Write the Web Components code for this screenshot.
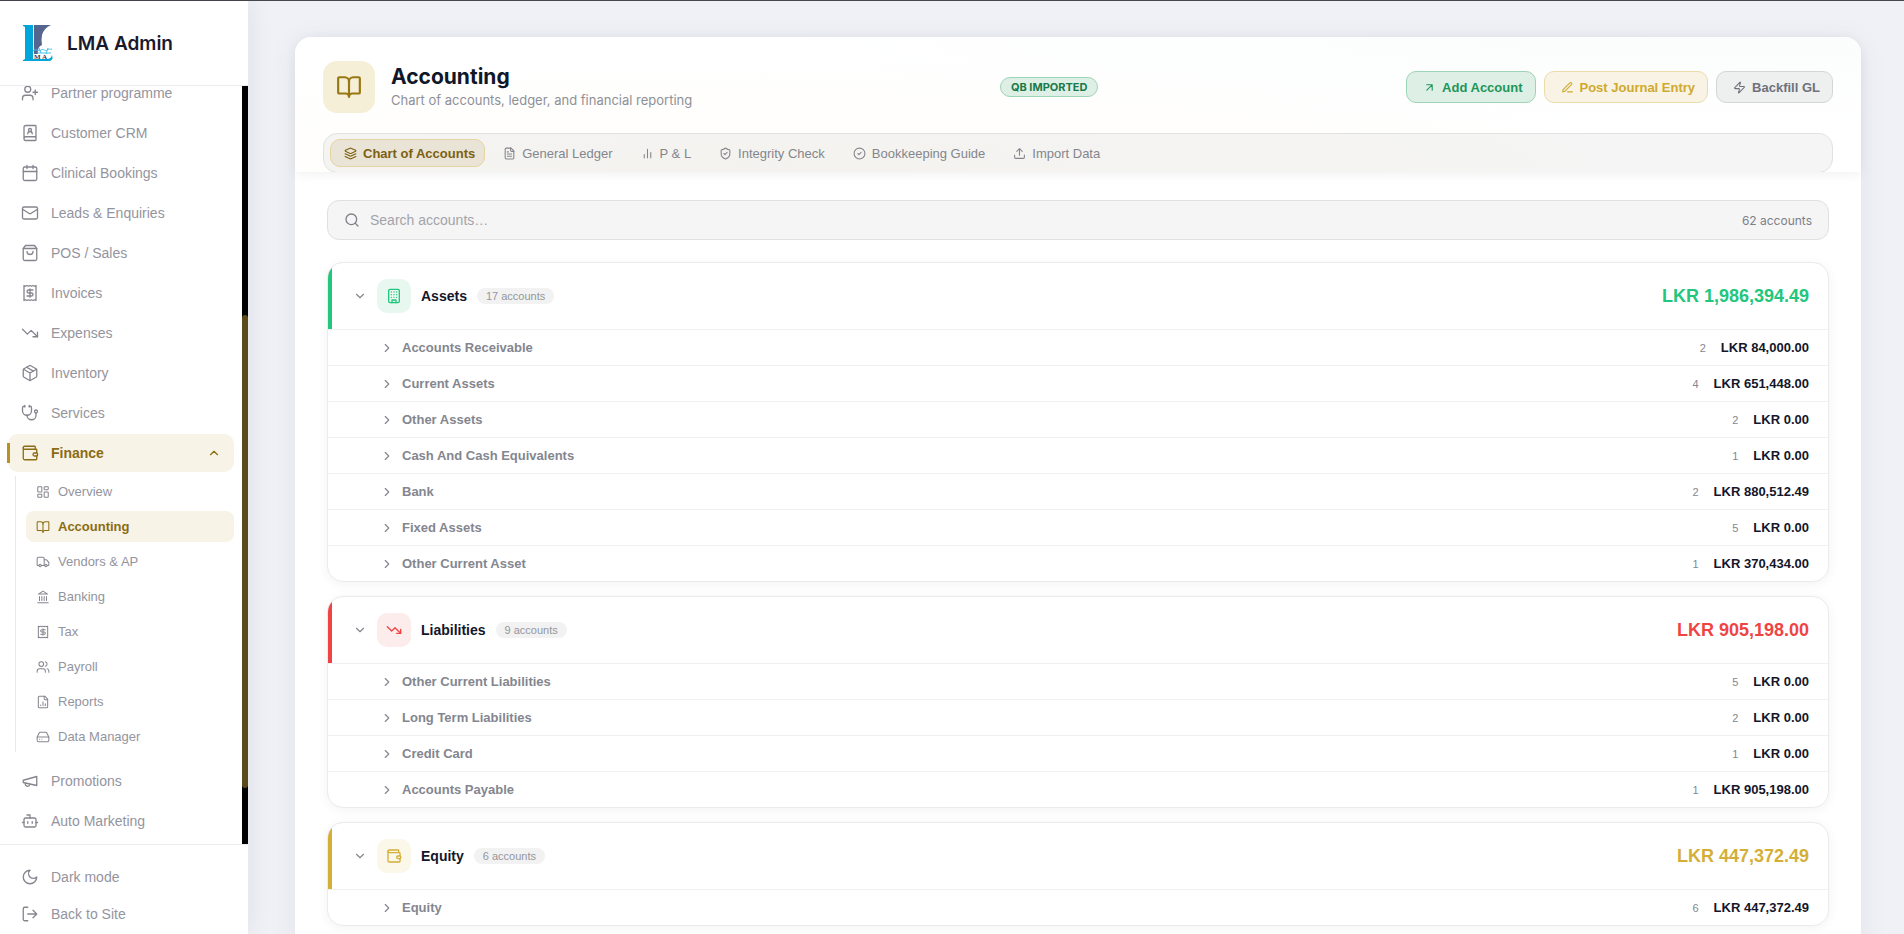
<!DOCTYPE html>
<html lang="en">
<head>
<meta charset="utf-8">
<meta name="viewport" content="width=device-width, initial-scale=1">
<title>LMA Admin - Accounting</title>
<style>
    body {
        margin: 0;
        background: #f0f1f7;
        color: #14162a;
        font-family: "Liberation Sans", Arial, sans-serif;
        font-size: 14px;
        overflow: hidden;
    }
</style>
</head>
<body>
<lma-app></lma-app>

<script>
/**
 * Inner markup of every icon, drawn on a 24x24 grid.
 */
const icons = {
    'user-plus': '<path d="M16 21v-2a4 4 0 0 0-4-4H6a4 4 0 0 0-4 4v2"/><circle cx="9" cy="7" r="4"/><path d="M19 8v6M22 11h-6"/>',
    'book-user': '<path d="M15 13a3 3 0 1 0-6 0"/><path d="M4 19.5v-15A2.5 2.5 0 0 1 6.5 2H19a1 1 0 0 1 1 1v18a1 1 0 0 1-1 1H6.5a1 1 0 0 1 0-5H20"/><circle cx="12" cy="8" r="2"/>',
    'calendar': '<path d="M8 2v4M16 2v4M3 10h18"/><rect width="18" height="18" x="3" y="4" rx="2"/>',
    'mail': '<rect width="20" height="16" x="2" y="4" rx="2"/><path d="m22 7-8.97 5.7a1.94 1.94 0 0 1-2.06 0L2 7"/>',
    'bag': '<path d="M6 2 3 6v14a2 2 0 0 0 2 2h14a2 2 0 0 0 2-2V6l-3-4Z"/><path d="M3 6h18M16 10a4 4 0 0 1-8 0"/>',
    'receipt': '<path d="M4 2v20l2-1 2 1 2-1 2 1 2-1 2 1 2-1 2 1V2l-2 1-2-1-2 1-2-1-2 1-2-1-2 1Z"/><path d="M16 8h-6a2 2 0 1 0 0 4h4a2 2 0 1 1 0 4H8M12 17.5v-11"/>',
    'trending-down': '<path d="M16 17h6v-6"/><path d="m22 17-8.5-8.5-5 5L2 7"/>',
    'package': '<path d="m7.5 4.27 9 5.15"/><path d="M21 8a2 2 0 0 0-1-1.73l-7-4a2 2 0 0 0-2 0l-7 4A2 2 0 0 0 3 8v8a2 2 0 0 0 1 1.73l7 4a2 2 0 0 0 2 0l7-4A2 2 0 0 0 21 16Z"/><path d="m3.3 7 8.7 5 8.7-5M12 22V12"/>',
    'stethoscope': '<path d="M11 2v2M5 2v2"/><path d="M5 3H4a2 2 0 0 0-2 2v4a6 6 0 0 0 12 0V5a2 2 0 0 0-2-2h-1"/><path d="M8 15a6 6 0 0 0 12 0v-3"/><circle cx="20" cy="10" r="2"/>',
    'wallet': '<path d="M19 7V4a1 1 0 0 0-1-1H5a2 2 0 0 0 0 4h15a1 1 0 0 1 1 1v4h-3a2 2 0 0 0 0 4h3a1 1 0 0 0 1-1v-2a1 1 0 0 0-1-1"/><path d="M3 5v14a2 2 0 0 0 2 2h15a1 1 0 0 0 1-1v-4"/>',
    'dashboard': '<rect width="7" height="9" x="3" y="3" rx="1"/><rect width="7" height="5" x="14" y="3" rx="1"/><rect width="7" height="9" x="14" y="12" rx="1"/><rect width="7" height="5" x="3" y="16" rx="1"/>',
    'book-open': '<path d="M12 7v14"/><path d="M3 18a1 1 0 0 1-1-1V4a1 1 0 0 1 1-1h5a4 4 0 0 1 4 4 4 4 0 0 1 4-4h5a1 1 0 0 1 1 1v13a1 1 0 0 1-1 1h-6a3 3 0 0 0-3 3 3 3 0 0 0-3-3z"/>',
    'truck': '<path d="M14 18V6a2 2 0 0 0-2-2H4a2 2 0 0 0-2 2v11a1 1 0 0 0 1 1h2M15 18H9"/><path d="M19 18h2a1 1 0 0 0 1-1v-3.65a1 1 0 0 0-.22-.624l-3.48-4.35A1 1 0 0 0 17.52 8H14"/><circle cx="17" cy="18" r="2"/><circle cx="7" cy="18" r="2"/>',
    'landmark': '<path d="M3 22h18M6 18v-7M10 18v-7M14 18v-7M18 18v-7M12 2l8 5H4z"/>',
    'users': '<path d="M16 21v-2a4 4 0 0 0-4-4H6a4 4 0 0 0-4 4v2"/><circle cx="9" cy="7" r="4"/><path d="M22 21v-2a4 4 0 0 0-3-3.87M16 3.13a4 4 0 0 1 0 7.75"/>',
    'file-chart': '<path d="M15 2H6a2 2 0 0 0-2 2v16a2 2 0 0 0 2 2h12a2 2 0 0 0 2-2V7Z"/><path d="M14 2v4a2 2 0 0 0 2 2h4M8 18v-1M12 18v-6M16 18v-3"/>',
    'hard-drive': '<path d="M22 12H2M6 16h.01M10 16h.01"/><path d="M5.45 5.11 2 12v6a2 2 0 0 0 2 2h16a2 2 0 0 0 2-2v-6l-3.45-6.89A2 2 0 0 0 16.76 4H7.24a2 2 0 0 0-1.79 1.11z"/>',
    'megaphone': '<path d="m3 11 18-5v12L3 14v-3z"/><path d="M11.6 16.8a3 3 0 1 1-5.8-1.6"/>',
    'bot': '<path d="M12 8V4H8"/><rect width="16" height="12" x="4" y="8" rx="2"/><path d="M2 14h2M20 14h2M15 13v2M9 13v2"/>',
    'moon': '<path d="M12 3a6 6 0 0 0 9 9 9 9 0 1 1-9-9Z"/>',
    'log-out': '<path d="M9 21H5a2 2 0 0 1-2-2V5a2 2 0 0 1 2-2h4M16 17l5-5-5-5M21 12H9"/>',
    'layers': '<path d="M12.83 2.18a2 2 0 0 0-1.66 0L2.6 6.08a1 1 0 0 0 0 1.83l8.58 3.91a2 2 0 0 0 1.66 0l8.58-3.9a1 1 0 0 0 0-1.83z"/><path d="m22 12.65-9.17 4.16a2 2 0 0 1-1.66 0L2 12.65"/><path d="m22 17.65-9.17 4.16a2 2 0 0 1-1.66 0L2 17.65"/>',
    'file-text': '<path d="M15 2H6a2 2 0 0 0-2 2v16a2 2 0 0 0 2 2h12a2 2 0 0 0 2-2V7Z"/><path d="M14 2v4a2 2 0 0 0 2 2h4M10 9H8M16 13H8M16 17H8"/>',
    'bars': '<path d="M18 20V10M12 20V4M6 20v-6"/>',
    'shield': '<path d="M20 13c0 5-3.5 7.5-7.66 8.95a1 1 0 0 1-.67-.01C7.5 20.5 4 18 4 13V6a1 1 0 0 1 1-1c2 0 4.5-1.2 6.24-2.72a1.17 1.17 0 0 1 1.52 0C14.51 3.81 17 5 19 5a1 1 0 0 1 1 1z"/><path d="m9 12 2 2 4-4"/>',
    'circle-check': '<circle cx="12" cy="12" r="10"/><path d="m9 12 2 2 4-4"/>',
    'upload': '<path d="M21 15v4a2 2 0 0 1-2 2H5a2 2 0 0 1-2-2v-4M17 8l-5-5-5 5M12 3v12"/>',
    'arrow': '<path d="M7 7h10v10M7 17 17 7"/>',
    'pen': '<path d="M12 20h9"/><path d="M16.376 3.622a1 1 0 0 1 3.002 3.002L7.368 18.635a2 2 0 0 1-.855.506l-2.872.838a.5.5 0 0 1-.62-.62l.838-2.872a2 2 0 0 1 .506-.854z"/>',
    'zap': '<path d="M4 14a1 1 0 0 1-.78-1.63l9.9-10.2a.5.5 0 0 1 .86.46l-1.92 6.02A1 1 0 0 0 13 10h7a1 1 0 0 1 .78 1.63l-9.9 10.2a.5.5 0 0 1-.86-.46l1.92-6.02A1 1 0 0 0 11 14z"/>',
    'building': '<rect width="16" height="20" x="4" y="2" rx="2"/><path d="M9 22v-4h6v4M8 6h.01M16 6h.01M12 6h.01M12 10h.01M12 14h.01M16 10h.01M16 14h.01M8 10h.01M8 14h.01"/>',
    'search': '<circle cx="11" cy="11" r="8"/><path d="m21 21-4.3-4.3"/>',
    'down': '<path d="m6 9 6 6 6-6"/>',
    'up': '<path d="m18 15-6-6-6 6"/>',
    'right': '<path d="m9 18 6-6-6-6"/>'
};

/**
 * Attaches an open shadow root filled with the given markup.
 */
function render(element, markup) {
    const template = document.createElement('template');
    template.innerHTML = markup;
    element.attachShadow({mode: 'open'}).appendChild(template.content.cloneNode(true));
}

/**
 * <lma-icon name="mail" size="18"></lma-icon>
 */
class LmaIcon extends HTMLElement {
    connectedCallback() {
        if (this.shadowRoot) {
            return;
        }
        const size = this.getAttribute('size') || 18;
        const stroke = this.getAttribute('stroke') || 2;
        render(this, `
            <style>
                :host { display: block; flex: none; }
                svg { display: block; }
            </style>
            <svg width="${size}" height="${size}" viewBox="0 0 24 24" fill="none" stroke="currentColor"
                stroke-width="${stroke}" stroke-linecap="round" stroke-linejoin="round" aria-hidden="true">
                ${icons[this.getAttribute('name')]}
            </svg>
        `);
    }
}

/**
 * One line of the side menu. Attributes: icon, sub, active, expanded, action.
 */
class LmaNavItem extends HTMLElement {
    connectedCallback() {
        if (this.shadowRoot) {
            return;
        }
        const sub = this.hasAttribute('sub');
        const isButton = this.hasAttribute('action') || this.hasAttribute('expanded');
        const tag = isButton ? 'button type="button"' : 'a href="#"';
        render(this, `
            <style>
                :host { display: block; flex: none; }
                a, button {
                    position: relative;
                    box-sizing: border-box;
                    display: flex;
                    align-items: center;
                    gap: 12px;
                    width: 100%;
                    height: var(--item-height, 38px);
                    padding: 0 13px;
                    border: 0;
                    border-radius: 10px;
                    background: none;
                    color: #94949e;
                    font: inherit;
                    font-size: 14px;
                    text-align: left;
                    text-decoration: none;
                    white-space: nowrap;
                    cursor: pointer;
                }
                lma-icon { color: #85858f; }
                .label { flex: 1; }
                :host([sub]) a {
                    gap: 8px;
                    height: 31px;
                    padding: 0 10px;
                    border-radius: 8px;
                    font-size: 13px;
                }
                :host([active]) a, :host([active]) button {
                    background: #f8f3e7;
                    color: #8b6c12;
                    font-weight: bold;
                }
                :host([active]) lma-icon { color: #8b6c12; }
                :host([expanded]) button::before {
                    content: "";
                    position: absolute;
                    left: -1px;
                    top: 9px;
                    bottom: 9px;
                    width: 3px;
                    background: #b8921f;
                }
            </style>
            <${tag}>
                <lma-icon name="${this.getAttribute('icon')}" size="${sub ? 14 : 18}" stroke="1.75"></lma-icon>
                <span class="label"><slot></slot></span>
                ${this.hasAttribute('expanded') ? '<lma-icon name="up" size="14"></lma-icon>' : ''}
            </${isButton ? 'button' : 'a'}>
        `);
    }
}

class LmaLogo extends HTMLElement {
    constructor() {
        super();
        render(this, `
            <style>
                :host { display: block; flex: none; }
                svg { display: block; }
            </style>
            <svg width="36" height="38" viewBox="0 0 36 38" aria-hidden="true">
                <path d="M14 1h17q-7 3-9 10-1 5 0 10-5 2-4 9h-4z" fill="#54658f"/>
                <path d="M3 1h10v34h14q4 0 5-4 2 6-4 6H3v-1l2-1V3L3 2z" fill="#00a5d9"/>
                <path d="M13 27c3-3 5 1 8-1s4 2 6 0 3 0 5-1M17 29h14M19 24l2 5M28 24l-2 6" fill="none" stroke="#49c3ea" stroke-width="1"/>
                <text x="14" y="35" font-family="Liberation Serif, serif" font-size="7" fill="#33405f">M A</text>
            </svg>
        `);
    }
}

class LmaSidebar extends HTMLElement {
    constructor() {
        super();
        render(this, `
            <style>
                :host {
                    display: flex;
                    flex-direction: column;
                    min-height: 0;
                    background: #fff;
                    box-shadow: 2px 0 24px rgba(20, 22, 42, 0.07);
                    z-index: 1;
                }
                header {
                    box-sizing: border-box;
                    display: flex;
                    align-items: center;
                    gap: 11px;
                    height: 85px;
                    padding: 0 20px;
                    border-bottom: 1px solid #ececee;
                    color: #1a1a2e;
                    font: 600 19px Inter, sans-serif;
                }
                .middle {
                    flex: 1;
                    min-height: 0;
                    display: flex;
                }
                nav {
                    flex: 1;
                    display: flex;
                    flex-direction: column;
                    justify-content: flex-end;
                    gap: 2px;
                    padding: 0 8px 4px;
                    overflow: hidden;
                }
                .group {
                    display: flex;
                    flex-direction: column;
                    gap: 4px;
                    margin: 2px 0 8px 7px;
                    padding-left: 10px;
                    border-left: 1px solid #f3e8cb;
                }
                .track {
                    display: flex;
                    flex-direction: column;
                    width: 6px;
                    background: #000;
                }
                .track::before { content: ""; flex: 229; }
                .track::after { content: ""; flex: 56; }
                .thumb {
                    flex: 473;
                    border-radius: 3px;
                    background: #5a4a1a;
                }
                footer {
                    --item-height: 35px;
                    box-sizing: border-box;
                    display: flex;
                    flex-direction: column;
                    gap: 2px;
                    height: 90px;
                    padding: 14px 8px 0;
                    border-top: 1px solid #ececee;
                }
            </style>
            <header><lma-logo></lma-logo><span>LMA Admin</span></header>
            <div class="middle">
                <nav aria-label="Main">
                    <lma-nav-item icon="user-plus">Partner programme</lma-nav-item>
                    <lma-nav-item icon="book-user">Customer CRM</lma-nav-item>
                    <lma-nav-item icon="calendar">Clinical Bookings</lma-nav-item>
                    <lma-nav-item icon="mail">Leads &amp; Enquiries</lma-nav-item>
                    <lma-nav-item icon="bag">POS / Sales</lma-nav-item>
                    <lma-nav-item icon="receipt">Invoices</lma-nav-item>
                    <lma-nav-item icon="trending-down">Expenses</lma-nav-item>
                    <lma-nav-item icon="package">Inventory</lma-nav-item>
                    <lma-nav-item icon="stethoscope">Services</lma-nav-item>
                    <lma-nav-item icon="wallet" active expanded>Finance</lma-nav-item>
                    <div class="group">
                        <lma-nav-item sub icon="dashboard">Overview</lma-nav-item>
                        <lma-nav-item sub icon="book-open" active>Accounting</lma-nav-item>
                        <lma-nav-item sub icon="truck">Vendors &amp; AP</lma-nav-item>
                        <lma-nav-item sub icon="landmark">Banking</lma-nav-item>
                        <lma-nav-item sub icon="receipt">Tax</lma-nav-item>
                        <lma-nav-item sub icon="users">Payroll</lma-nav-item>
                        <lma-nav-item sub icon="file-chart">Reports</lma-nav-item>
                        <lma-nav-item sub icon="hard-drive">Data Manager</lma-nav-item>
                    </div>
                    <lma-nav-item icon="megaphone">Promotions</lma-nav-item>
                    <lma-nav-item icon="bot">Auto Marketing</lma-nav-item>
                </nav>
                <div class="track"><div class="thumb"></div></div>
            </div>
            <footer>
                <lma-nav-item icon="moon" action>Dark mode</lma-nav-item>
                <lma-nav-item icon="log-out">Back to Site</lma-nav-item>
            </footer>
        `);
    }
}

/**
 * Tinted button of the page header. Attributes: icon, tone (green, gold, grey).
 */
class LmaButton extends HTMLElement {
    connectedCallback() {
        if (this.shadowRoot) {
            return;
        }
        render(this, `
            <style>
                :host {
                    display: block;
                    --color: #6f727c;
                    --fill: #eeefef;
                    --line: #d3d5d6;
                }
                :host([tone=green]) { --color: #1f9557; --fill: #deefe6; --line: #9dd3b6; }
                :host([tone=gold]) { --color: #d0a92f; --fill: #f8f3e4; --line: #ecdca9; }
                button {
                    box-sizing: border-box;
                    display: flex;
                    align-items: center;
                    gap: 6px;
                    height: 32px;
                    padding: 0 12px 0 16px;
                    border: 1px solid var(--line);
                    border-radius: 10px;
                    background: var(--fill);
                    color: var(--color);
                    font: inherit;
                    font-size: 13px;
                    font-weight: bold;
                    white-space: nowrap;
                    cursor: pointer;
                }
            </style>
            <button type="button">
                <lma-icon name="${this.getAttribute('icon')}" size="13"></lma-icon>
                <slot></slot>
            </button>
        `);
    }
}

class LmaTab extends HTMLElement {
    connectedCallback() {
        if (this.shadowRoot) {
            return;
        }
        render(this, `
            <style>
                :host { display: block; }
                button {
                    box-sizing: border-box;
                    display: flex;
                    align-items: center;
                    gap: 6px;
                    height: 28px;
                    padding: 0 9px 0 13px;
                    border: 1px solid transparent;
                    border-radius: 10px;
                    background: none;
                    color: #84868d;
                    font: inherit;
                    font-size: 13px;
                    white-space: nowrap;
                    cursor: pointer;
                }
                :host([active]) button {
                    border-color: #e3d4a3;
                    background: #e9e4d6;
                    color: #7d6011;
                    font-weight: bold;
                }
            </style>
            <button type="button" role="tab" aria-selected="${this.hasAttribute('active')}">
                <lma-icon name="${this.getAttribute('icon')}" size="13"></lma-icon>
                <slot></slot>
            </button>
        `);
    }
}

class LmaHero extends HTMLElement {
    constructor() {
        super();
        render(this, `
            <style>
                :host {
                    display: flex;
                    flex-direction: column;
                    gap: 20px;
                    padding: 24px 28px 0;
                    overflow: hidden;
                    border-radius: 16px 16px 0 0;
                    background:
                        radial-gradient(ellipse at 90% 0%, rgba(34, 160, 100, 0.02), transparent 50%),
                        radial-gradient(ellipse at 30% 100%, rgba(212, 175, 55, 0.03), transparent 60%),
                        #fff;
                    box-shadow: 0 2px 12px rgba(20, 22, 42, 0.06);
                }
                .top, .title, .actions { display: flex; align-items: center; }
                .top { justify-content: space-between; }
                .title { gap: 16px; }
                .actions { gap: 8px; }
                .tile {
                    display: grid;
                    place-items: center;
                    width: 52px;
                    height: 52px;
                    border-radius: 14px;
                    background: #f6efd7;
                    color: #977711;
                }
                h1 {
                    margin: 0;
                    color: #0f172a;
                    font: bold 21px/26px Inter, sans-serif;
                }
                p {
                    margin: 0;
                    color: #8e9097;
                    font: 13px/20px Inter, sans-serif;
                }
                .badge {
                    padding: 0 10px;
                    border: 1px solid #9dd3b6;
                    border-radius: 10px;
                    background: #deefe6;
                    color: #1a7a48;
                    font: bold 11px/18px Inter, sans-serif;
                }
                .tabs {
                    box-sizing: border-box;
                    display: flex;
                    gap: 4px;
                    height: 40px;
                    margin-bottom: -1px;
                    padding: 5px 6px;
                    border: 1px solid #e0e1e0;
                    border-radius: 14px;
                    background: rgba(0, 0, 0, 0.04);
                }
            </style>
            <div class="top">
                <div class="title">
                    <div class="tile"><lma-icon name="book-open" size="26"></lma-icon></div>
                    <div>
                        <h1>Accounting</h1>
                        <p>Chart of accounts, ledger, and financial reporting</p>
                    </div>
                </div>
                <span class="badge">QB IMPORTED</span>
                <div class="actions">
                    <lma-button icon="arrow" tone="green">Add Account</lma-button>
                    <lma-button icon="pen" tone="gold">Post Journal Entry</lma-button>
                    <lma-button icon="zap">Backfill GL</lma-button>
                </div>
            </div>
            <div class="tabs" role="tablist">
                <lma-tab icon="layers" active>Chart of Accounts</lma-tab>
                <lma-tab icon="file-text">General Ledger</lma-tab>
                <lma-tab icon="bars">P &amp; L</lma-tab>
                <lma-tab icon="shield">Integrity Check</lma-tab>
                <lma-tab icon="circle-check">Bookkeeping Guide</lma-tab>
                <lma-tab icon="upload">Import Data</lma-tab>
            </div>
        `);
    }
}

class LmaSearch extends HTMLElement {
    constructor() {
        super();
        render(this, `
            <style>
                :host {
                    box-sizing: border-box;
                    display: flex;
                    align-items: center;
                    gap: 10px;
                    height: 40px;
                    padding: 0 16px;
                    border: 1px solid #e0e0e1;
                    border-radius: 12px;
                    background: #f5f5f5;
                    color: #7d8089;
                }
                input {
                    flex: 1;
                    min-width: 0;
                    padding: 0;
                    border: 0;
                    outline: 0;
                    background: none;
                    color: #14162a;
                    font: inherit;
                    font-size: 14px;
                }
                input::placeholder { color: #a3a4aa; opacity: 1; }
                span { font: 12px Inter, sans-serif; }
            </style>
            <lma-icon name="search" size="16"></lma-icon>
            <input type="text" aria-label="Search accounts" placeholder="Search accounts…">
            <span><slot></slot></span>
        `);
    }
}

/**
 * Card of one account class. Its sub-accounts are passed in the slot.
 * Attributes: name, icon, count, total, tone (green, red, gold).
 */
class LmaAccountGroup extends HTMLElement {
    connectedCallback() {
        if (this.shadowRoot) {
            return;
        }
        render(this, `
            <style>
                :host {
                    display: block;
                    overflow: hidden;
                    border: 1px solid #ebebec;
                    border-radius: 16px;
                    background: #fff;
                    box-shadow: 0 2px 12px rgba(20, 22, 42, 0.05);
                    --color: #22c67c;
                    --fill: #e8f8f1;
                }
                :host([tone=red]) { --color: #ef4444; --fill: #fdecec; }
                :host([tone=gold]) { --color: #d4af37; --fill: #fbf7e9; }
                button {
                    box-sizing: border-box;
                    display: flex;
                    align-items: center;
                    gap: 10px;
                    width: 100%;
                    height: 66px;
                    padding: 0 19px 0 21px;
                    border: 0;
                    border-left: 4px solid var(--color);
                    background: none;
                    color: #84868d;
                    font: inherit;
                    cursor: pointer;
                }
                .tile {
                    display: grid;
                    place-items: center;
                    width: 34px;
                    height: 34px;
                    border-radius: 10px;
                    background: var(--fill);
                    color: var(--color);
                }
                .name { color: #14162a; font-size: 14px; font-weight: bold; }
                .count {
                    padding: 0 9px;
                    border-radius: 8px;
                    background: #f2f2f2;
                    color: #94969c;
                    font-size: 11px;
                    line-height: 16px;
                }
                .total {
                    margin-left: auto;
                    color: var(--color);
                    font-size: 18px;
                    font-weight: bold;
                }
            </style>
            <button type="button" aria-expanded="true">
                <lma-icon name="down" size="14"></lma-icon>
                <span class="tile"><lma-icon name="${this.getAttribute('icon')}" size="16"></lma-icon></span>
                <span class="name">${this.getAttribute('name')}</span>
                <span class="count">${this.getAttribute('count')}</span>
                <span class="total">${this.getAttribute('total')}</span>
            </button>
            <slot></slot>
        `);
    }
}

class LmaAccountRow extends HTMLElement {
    connectedCallback() {
        if (this.shadowRoot) {
            return;
        }
        render(this, `
            <style>
                :host { display: block; }
                button {
                    box-sizing: border-box;
                    display: flex;
                    align-items: center;
                    gap: 8px;
                    width: 100%;
                    height: 36px;
                    padding: 0 19px 0 52px;
                    border: 0;
                    border-top: 1px solid #f0f0f1;
                    background: none;
                    color: #84868f;
                    font: inherit;
                    font-size: 13px;
                    font-weight: bold;
                    cursor: pointer;
                }
                .count {
                    margin-left: auto;
                    margin-right: 7px;
                    font-size: 11px;
                    font-weight: normal;
                }
                .amount { color: #14162a; }
            </style>
            <button type="button" aria-expanded="false">
                <lma-icon name="right" size="14"></lma-icon>
                <span><slot></slot></span>
                <span class="count">${this.getAttribute('count')}</span>
                <span class="amount">${this.getAttribute('amount')}</span>
            </button>
        `);
    }
}

class LmaApp extends HTMLElement {
    constructor() {
        super();
        render(this, `
            <style>
                :host {
                    box-sizing: border-box;
                    display: grid;
                    grid-template-columns: 248px minmax(0, 1fr);
                    grid-template-rows: minmax(0, 1fr);
                    height: 100vh;
                    border-top: 1px solid #44474c;
                }
                main {
                    padding: 36px 43px 36px 47px;
                    overflow: hidden;
                }
                .card {
                    border-radius: 16px;
                    background: #fff;
                    box-shadow: 0 4px 32px rgba(20, 22, 42, 0.06);
                }
                .body {
                    display: flex;
                    flex-direction: column;
                    gap: 14px;
                    padding: 28px 32px;
                }
                lma-search { margin-bottom: 8px; }
            </style>
            <lma-sidebar></lma-sidebar>
            <main>
                <div class="card">
                    <lma-hero></lma-hero>
                    <div class="body">
                        <lma-search>62 accounts</lma-search>
                        <lma-account-group name="Assets" icon="building" count="17 accounts" total="LKR 1,986,394.49" tone="green">
                            <lma-account-row count="2" amount="LKR 84,000.00">Accounts Receivable</lma-account-row>
                            <lma-account-row count="4" amount="LKR 651,448.00">Current Assets</lma-account-row>
                            <lma-account-row count="2" amount="LKR 0.00">Other Assets</lma-account-row>
                            <lma-account-row count="1" amount="LKR 0.00">Cash And Cash Equivalents</lma-account-row>
                            <lma-account-row count="2" amount="LKR 880,512.49">Bank</lma-account-row>
                            <lma-account-row count="5" amount="LKR 0.00">Fixed Assets</lma-account-row>
                            <lma-account-row count="1" amount="LKR 370,434.00">Other Current Asset</lma-account-row>
                        </lma-account-group>
                        <lma-account-group name="Liabilities" icon="trending-down" count="9 accounts" total="LKR 905,198.00" tone="red">
                            <lma-account-row count="5" amount="LKR 0.00">Other Current Liabilities</lma-account-row>
                            <lma-account-row count="2" amount="LKR 0.00">Long Term Liabilities</lma-account-row>
                            <lma-account-row count="1" amount="LKR 0.00">Credit Card</lma-account-row>
                            <lma-account-row count="1" amount="LKR 905,198.00">Accounts Payable</lma-account-row>
                        </lma-account-group>
                        <lma-account-group name="Equity" icon="wallet" count="6 accounts" total="LKR 447,372.49" tone="gold">
                            <lma-account-row count="6" amount="LKR 447,372.49">Equity</lma-account-row>
                        </lma-account-group>
                    </div>
                </div>
            </main>
        `);
    }
}

customElements.define('lma-icon', LmaIcon);
customElements.define('lma-logo', LmaLogo);
customElements.define('lma-nav-item', LmaNavItem);
customElements.define('lma-sidebar', LmaSidebar);
customElements.define('lma-button', LmaButton);
customElements.define('lma-tab', LmaTab);
customElements.define('lma-hero', LmaHero);
customElements.define('lma-search', LmaSearch);
customElements.define('lma-account-row', LmaAccountRow);
customElements.define('lma-account-group', LmaAccountGroup);
customElements.define('lma-app', LmaApp);
</script>
</body>
</html>
